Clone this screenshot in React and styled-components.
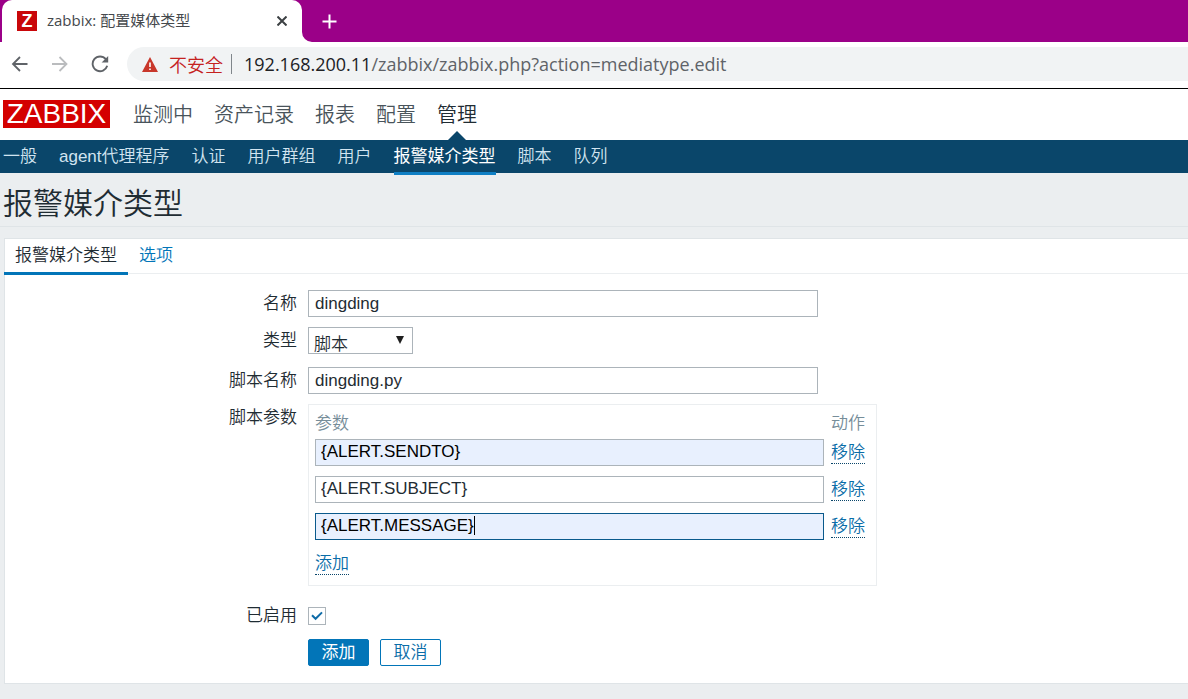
import React, { useState } from "react";
import styled, { createGlobalStyle, css } from "styled-components";

const topMenu = ["监测中", "资产记录", "报表", "配置", "管理"];
const subMenu = ["一般", "agent代理程序", "认证", "用户群组", "用户", "报警媒介类型", "脚本", "队列"];

export default function App() {
  const [params, setParams] = useState([
    { value: "{ALERT.SENDTO}", filled: true },
    { value: "{ALERT.SUBJECT}" },
    { value: "{ALERT.MESSAGE}", active: true },
  ]);

  const changeParam = (index, value) => {
    setParams(params.map((param, i) => (i === index ? { ...param, value } : param)));
  };

  return (
    <>
      <GlobalStyle />
      <TabStrip>
        <BrowserTab>
          <Favicon>Z</Favicon>
          <span className="title">zabbix: 配置媒体类型</span>
          <IconButton aria-label="关闭">
            <svg width="10" height="10" viewBox="0 0 10 10" stroke="#3c4043" strokeWidth="2">
              <path d="M0.5 0.5L9.5 9.5M9.5 0.5L0.5 9.5" />
            </svg>
          </IconButton>
          <svg className="curve" width="10" height="10" viewBox="0 0 10 10">
            <path d="M0 0A10 10 0 0 0 10 10H0Z" fill="#fff" />
          </svg>
        </BrowserTab>
        <IconButton aria-label="新标签页">
          <svg width="15" height="15" viewBox="0 0 15 15" stroke="#fff" strokeWidth="2">
            <path d="M7.5 0.5V14.5M0.5 7.5H14.5" />
          </svg>
        </IconButton>
      </TabStrip>
      <Toolbar>
        <IconButton aria-label="后退">
          <svg width="18" height="18" viewBox="0 0 18 18" fill="none" stroke="#5f6368" strokeWidth="1.8">
            <path d="M16.5 9H2M9 2L2 9L9 16" />
          </svg>
        </IconButton>
        <IconButton aria-label="前进">
          <svg width="18" height="18" viewBox="0 0 18 18" fill="none" stroke="#babcbe" strokeWidth="1.8">
            <path d="M1 9H15.5M8.5 2L15.5 9L8.5 16" />
          </svg>
        </IconButton>
        <IconButton aria-label="重新加载">
          <svg width="18" height="18" viewBox="0 0 18 18" fill="none" stroke="#5f6368" strokeWidth="1.9">
            <path d="M14.8 4.2A7.4 7.4 0 1 0 16.2 10.8" />
            <path d="M17.2 1V7.6H10.6Z" fill="#5f6368" stroke="none" />
          </svg>
        </IconButton>
        <AddressBar>
          <svg width="16" height="15" viewBox="0 0 16 15">
            <path d="M8 0L16 15H0Z" fill="#c8372b" />
            <path d="M7.2 5.5H8.8V10H7.2ZM7.2 11.4H8.8V13H7.2Z" fill="#fff" />
          </svg>
          <span className="warning">不安全</span>
          <span className="divider" />
          <span className="url">
            <b>192.168.200.11</b>/zabbix/zabbix.php?action=mediatype.edit
          </span>
        </AddressBar>
      </Toolbar>

      <Header>
        <Logo href="#">ZABBIX</Logo>
        {topMenu.map((item) => (
          <TopLink key={item} href="#" $active={item === "管理"}>
            {item}
          </TopLink>
        ))}
      </Header>
      <SubNav>
        {subMenu.map((item) => (
          <SubLink key={item} href="#" $active={item === "报警媒介类型"}>
            {item}
          </SubLink>
        ))}
      </SubNav>
      <Title>报警媒介类型</Title>

      <Panel>
        <Tabs>
          <FormTab href="#" $active>
            报警媒介类型
          </FormTab>
          <FormTab href="#">选项</FormTab>
        </Tabs>
        <Form onSubmit={(e) => e.preventDefault()}>
          <Label htmlFor="name">名称</Label>
          <TextInput id="name" defaultValue="dingding" />

          <Label htmlFor="type">类型</Label>
          <SelectBox>
            <select id="type" defaultValue="脚本">
              <option>脚本</option>
            </select>
            <svg width="8" height="8" viewBox="0 0 8 8">
              <path d="M0 0H8L4 8Z" fill="#1f1f1f" />
            </svg>
          </SelectBox>

          <Label htmlFor="script">脚本名称</Label>
          <TextInput id="script" defaultValue="dingding.py" />

          <Label as="span">脚本参数</Label>
          <ParamBox>
            <ParamTable>
              <thead>
                <tr>
                  <th>参数</th>
                  <th>动作</th>
                </tr>
              </thead>
              <tbody>
                {params.map(({ value, filled, active }, index) => (
                  <tr key={index}>
                    <td>
                      <ParamField>
                        <ParamInput
                          aria-label="参数"
                          value={value}
                          $filled={filled}
                          $active={active}
                          onChange={(e) => changeParam(index, e.target.value)}
                        />
                        {active && (
                          <Caret aria-hidden="true">
                            <span>{value}</span>
                          </Caret>
                        )}
                      </ParamField>
                    </td>
                    <td>
                      <LinkButton
                        type="button"
                        onClick={() => setParams(params.filter((_, i) => i !== index))}
                      >
                        移除
                      </LinkButton>
                    </td>
                  </tr>
                ))}
                <tr>
                  <td colSpan="2">
                    <LinkButton type="button" onClick={() => setParams([...params, { value: "" }])}>
                      添加
                    </LinkButton>
                  </td>
                </tr>
              </tbody>
            </ParamTable>
          </ParamBox>

          <Label htmlFor="enabled" $bottom>
            已启用
          </Label>
          <CheckBox>
            <input id="enabled" type="checkbox" defaultChecked />
            <svg width="12" height="10" viewBox="0 0 12 10" fill="none" stroke="#0f6ca8" strokeWidth="2">
              <path d="M1 4.2L4.6 7.8L11 1.4" />
            </svg>
          </CheckBox>

          <Actions>
            <Button type="submit" $primary>
              添加
            </Button>
            <Button type="button">取消</Button>
          </Actions>
        </Form>
      </Panel>
    </>
  );
}

const GlobalStyle = createGlobalStyle`
  * {
    box-sizing: border-box;
  }
  body {
    margin: 0;
    background: #ebeef0;
    color: #1f2c33;
    font-family: "Liberation Sans", "Noto Sans CJK SC", sans-serif;
    font-size: 17px;
    font-weight: 350;
    overflow-x: hidden;
  }
  a {
    text-decoration: none;
  }
  button, input, select {
    font: inherit;
    color: inherit;
  }
`;

const IconButton = styled.button`
  display: flex;
  padding: 0;
  border: 0;
  background: none;
  cursor: pointer;
`;

const TabStrip = styled.div`
  display: flex;
  align-items: center;
  gap: 20px;
  height: 42px;
  padding-left: 2px;
  background: #9b0088;
`;

const BrowserTab = styled.div`
  position: relative;
  display: flex;
  align-items: center;
  gap: 10px;
  width: 300px;
  height: 42px;
  padding: 0 15px;
  border-radius: 10px 10px 0 0;
  background: #fff;
  font-family: "Open Sans", "Noto Sans CJK SC", sans-serif;
  font-size: 15px;
  font-weight: 400;
  line-height: 20px;
  color: #45494d;
  .title {
    flex: 1;
    padding-bottom: 2px;
  }
  .curve {
    position: absolute;
    left: 100%;
    bottom: 0;
  }
`;

const Favicon = styled.span`
  width: 20px;
  height: 20px;
  background: #c9070a;
  color: #fff;
  font: bold 18px/20px "Liberation Sans", sans-serif;
  text-align: center;
`;

const Toolbar = styled.div`
  display: flex;
  align-items: center;
  gap: 22px;
  height: 47px;
  padding: 0 0 2px 11px;
  border-bottom: 1px solid #000;
  background: #fff;
`;

const AddressBar = styled.div`
  flex: 1;
  display: flex;
  align-items: center;
  height: 34px;
  margin-left: -4px;
  padding-left: 15px;
  border-radius: 17px 0 0 17px;
  background: #f1f3f4;
  font-family: "Open Sans", "Noto Sans CJK SC", sans-serif;
  font-size: 18px;
  .warning {
    margin-left: 11px;
    color: #c5221f;
  }
  .divider {
    width: 1px;
    height: 20px;
    margin: 0 12px 0 8px;
    background: #80868b;
  }
  .url {
    font-weight: 400;
    color: #5f6368;
  }
  b {
    font-weight: 400;
    color: #202124;
  }
`;

const Header = styled.header`
  display: flex;
  align-items: center;
  gap: 21px;
  height: 51px;
  padding: 0 0 1px 3px;
  background: #fff;
`;

const Logo = styled.a`
  width: 107px;
  height: 28px;
  margin-right: 2px;
  background: #d40000;
  color: #fff;
  font-size: 28px;
  line-height: 28px;
  text-align: center;
`;

const TopLink = styled.a`
  position: relative;
  font-size: 20px;
  line-height: 50px;
  padding-top: 1px;
  color: #49545b;
  ${({ $active }) =>
    $active &&
    css`
      color: #1f2c33;
      &::after {
        content: "";
        position: absolute;
        left: 50%;
        bottom: -1px;
        margin-left: -10px;
        border: 10px solid transparent;
        border-top: 0;
        border-bottom-color: #0a466a;
      }
    `}
`;

const SubNav = styled.nav`
  display: flex;
  gap: 22px;
  height: 33px;
  padding-left: 3px;
  background: #0a466a;
`;

const SubLink = styled.a`
  height: 35px;
  line-height: 34px;
  color: ${({ $active }) => ($active ? "#fff" : "#d1e4f0")};
  font-weight: ${({ $active }) => ($active ? 400 : 350)};
  border-bottom: 3px solid ${({ $active }) => ($active ? "#0f7fc4" : "transparent")};
`;

const Title = styled.h1`
  height: 54px;
  margin: 0 0 11px;
  padding-left: 3px;
  border-bottom: 1px solid #dfe4e7;
  font-size: 30px;
  font-weight: 350;
  line-height: 62px;
`;

const Panel = styled.main`
  margin-left: 4px;
  border: 1px solid #dfe4e7;
  border-width: 1px 0 1px 1px;
  background: #fff;
`;

const Tabs = styled.nav`
  display: flex;
  height: 35px;
  margin-left: -1px;
  border-bottom: 1px solid #ebeef0;
`;

const FormTab = styled.a`
  height: 36px;
  padding: 0 11px;
  line-height: 34px;
  color: ${({ $active }) => ($active ? "#1f2c33" : "#0275b8")};
  border-bottom: 3px solid ${({ $active }) => ($active ? "#0275b8" : "transparent")};
`;

const Form = styled.form`
  display: grid;
  grid-template-columns: 292px 1fr;
  column-gap: 11px;
  row-gap: 10px;
  padding: 16px 0 17px;
`;

const Label = styled.label`
  align-self: ${({ $bottom }) => ($bottom ? "end" : "start")};
  height: 27px;
  text-align: right;
  line-height: 28px;
`;

const TextInput = styled.input`
  display: block;
  width: 100%;
  max-width: 510px;
  height: 27px;
  padding: 0 6px;
  border: 1px solid ${({ $active }) => ($active ? "#0a5a8c" : "#acb4ba")};
  border-radius: 0;
  background: ${({ $filled, $active }) => ($filled || $active ? "#e8f0fe" : "#fff")};
  outline: 0;
`;

const ParamInput = styled(TextInput)`
  padding: 0 5px 2px;
  color: ${({ $filled, $active }) => ($filled || $active ? "#000" : "#1f2c33")};
`;

const SelectBox = styled.div`
  position: relative;
  width: 105px;
  height: 30px;
  select {
    appearance: none;
    display: block;
    width: 100%;
    height: 27px;
    padding: 5px 5px 0;
    border: 1px solid #acb4ba;
    border-radius: 0;
    background: #fff;
    line-height: 24px;
  }
  svg {
    position: absolute;
    top: 9px;
    right: 9px;
    pointer-events: none;
  }
`;

const ParamBox = styled.div`
  width: 569px;
  padding: 0 11px 0 6px;
  border: 1px solid #ebeef0;
`;

const ParamTable = styled.table`
  width: 100%;
  border-collapse: collapse;
  th {
    height: 34px;
    padding: 0 0 2px;
    font-weight: 350;
    text-align: left;
    color: #768d99;
  }
  td {
    padding: 0 0 10px;
    vertical-align: top;
  }
  td:last-child {
    width: 34px;
    white-space: nowrap;
  }
`;

const ParamField = styled.div`
  position: relative;
  margin-right: 7px;
`;

// text cursor drawn right after the value of the active field
const Caret = styled.div`
  position: absolute;
  top: 3px;
  left: 6px;
  pointer-events: none;
  color: transparent;
  span {
    display: block;
    height: 19px;
    border-right: 1px solid #000;
  }
`;

const LinkButton = styled.button`
  display: block;
  padding: 4px 0 0;
  border: 0;
  border-bottom: 1px dotted #0a466a;
  background: none;
  color: #0a6da8;
  line-height: 20px;
  cursor: pointer;
`;

const CheckBox = styled.div`
  position: relative;
  width: 18px;
  margin: 11px 0 4px;
  input {
    appearance: none;
    display: block;
    width: 18px;
    height: 18px;
    margin: 0;
    border: 1px solid #acb4ba;
    background: #fff;
  }
  svg {
    position: absolute;
    top: 4px;
    left: 3px;
    pointer-events: none;
  }
  input:not(:checked) + svg {
    display: none;
  }
`;

const Actions = styled.div`
  grid-column: 2;
  display: flex;
  gap: 11px;
`;

const Button = styled.button`
  width: 61px;
  height: 27px;
  padding: 0;
  border: 1px solid #0275b8;
  border-radius: 2px;
  background: ${({ $primary }) => ($primary ? "#0275b8" : "#fff")};
  color: ${({ $primary }) => ($primary ? "#fff" : "#0a6da8")};
  font-weight: ${({ $primary }) => ($primary ? 400 : 350)};
  line-height: 24px;
  cursor: pointer;
`;
